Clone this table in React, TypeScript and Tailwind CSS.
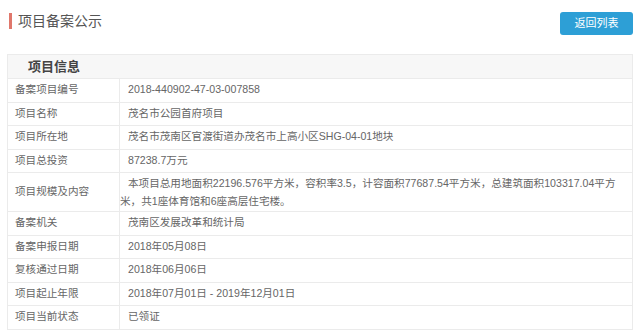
const rows: { label: string; value: string }[] = [
  { label: "备案项目编号", value: "2018-440902-47-03-007858" },
  { label: "项目名称", value: "茂名市公园首府项目" },
  { label: "项目所在地", value: "茂名市茂南区官渡街道办茂名市上高小区SHG-04-01地块" },
  { label: "项目总投资", value: "87238.7万元" },
];

const rowsAfter: { label: string; value: string }[] = [
  { label: "备案机关", value: "茂南区发展改革和统计局" },
  { label: "备案申报日期", value: "2018年05月08日" },
  { label: "复核通过日期", value: "2018年06月06日" },
  { label: "项目起止年限", value: "2018年07月01日 - 2019年12月01日" },
  { label: "项目当前状态", value: "已领证" },
];

function Row({ label, value }: { label: string; value: string }) {
  return (
    <div className="flex h-[23.5px] border-t border-[#ebebeb]">
      <div className="flex w-[112px] shrink-0 items-center border-r border-[#ebebeb] pl-[7px]">
        {label}
      </div>
      <div className="flex flex-1 items-center pl-2">{value}</div>
    </div>
  );
}

export default function App() {
  return (
    <div
      className="h-[336px] w-[640px] overflow-hidden bg-white text-[10.6px] text-[#666]"
      style={{ fontFamily: '"Liberation Sans", "Noto Sans CJK SC", sans-serif' }}
    >
      <div className="flex items-start justify-between pr-[7px] pl-[9px] pt-3">
        <div className="mt-[1px] flex items-center">
          <span className="h-4 w-[3px] bg-[#e0776b]" />
          <span className="ml-[6px] text-[14px] leading-4 text-[#555]">项目备案公示</span>
        </div>
        <button
          type="button"
          className="h-[23px] w-[73px] rounded-[3px] bg-[#2d9fd6] text-[11px] text-white"
        >
          返回列表
        </button>
      </div>

      <div className="mx-[7px] mt-[19px] border-x border-b border-[#ebebeb]">
        <div className="flex h-6 items-center border-t border-[#ebebeb] bg-[#f7f7f7] pl-[20px] text-[13px] font-bold text-[#444]">
          项目信息
        </div>
        {rows.map((row) => (
          <Row key={row.label} label={row.label} value={row.value} />
        ))}
        <div className="flex h-[39px] border-t border-[#ebebeb]">
          <div className="flex w-[112px] shrink-0 items-center border-r border-[#ebebeb] pl-[7px]">
            项目规模及内容
          </div>
          <div className="flex-1 whitespace-nowrap pt-[1px] leading-[18px]">
            <div className="pl-2">
              本项目总用地面积22196.576平方米，容积率3.5，计容面积77687.54平方米，总建筑面积103317.04平方
            </div>
            <div>米，共1座体育馆和6座高层住宅楼。</div>
          </div>
        </div>
        {rowsAfter.map((row) => (
          <Row key={row.label} label={row.label} value={row.value} />
        ))}
      </div>
    </div>
  );
}
